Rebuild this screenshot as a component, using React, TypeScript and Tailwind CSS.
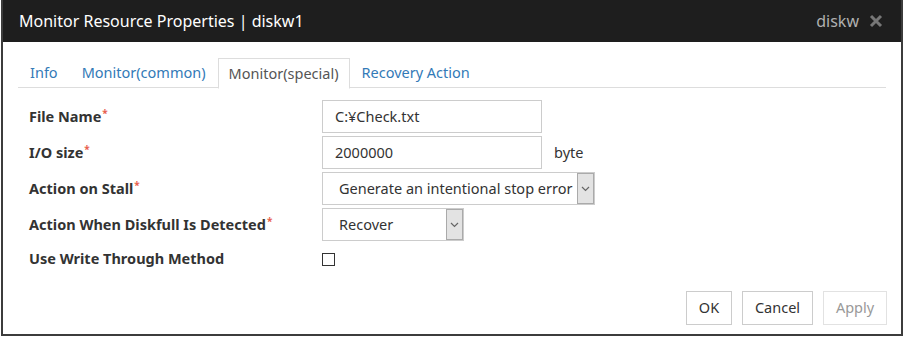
import React from 'react';

const tabs = ['Info', 'Monitor(common)', 'Monitor(special)', 'Recovery Action'];

const Star = () => <sup className="text-[#e8604c] text-[10px] font-bold -top-[5px] ml-[1px]">*</sup>;

const Arrow = () => (
  <div className="w-[17px] self-stretch bg-[#e3e3e3] border-[1px] border-[#aaa] flex items-center justify-center">
    <svg width="9" height="6" viewBox="0 0 9 6" fill="none" stroke="#666" strokeWidth={1.2}>
      <path d="M1 1l3.5 3.5L8 1" />
    </svg>
  </div>
);

const App: React.FC = () => {
  return (
    <div className="w-[904px] h-[338px] bg-white" style={{ fontFamily: '"Noto Sans", sans-serif' }}>
      <div className="ml-[1px] w-[902px] h-[336px] border-x-[2px] border-b-[2px] border-[#3c3c3c] flex flex-col">
        {/* Header */}
        <div className="h-[42px] bg-[#1e1e1e] flex items-center justify-between pl-[16px] pr-[18px]">
          <span className="text-white text-[16px]">Monitor Resource Properties | diskw1</span>
          <div className="flex items-center gap-[10px]">
            <span className="text-[#b0b0b0] text-[16px]">diskw</span>
            <svg width="14" height="14" viewBox="0 0 14 14" stroke="#777" strokeWidth={3}>
              <path d="M2 2l10 10M12 2L2 12" />
            </svg>
          </div>
        </div>

        {/* Tabs */}
        <div className="mx-[15px] mt-[16px] flex border-b border-[#ddd] h-[30px]">
          {tabs.map((t) => (
            <div
              key={t}
              className={`flex items-center text-[14.5px] ${
                t === 'Monitor(special)'
                  ? 'text-[#555] bg-white border border-[#ddd] border-b-white -mb-[1px] h-[31px] px-[10px]'
                  : 'text-[#337ab7] px-[12px]'
              }`}
            >
              {t}
            </div>
          ))}
        </div>

        {/* Form */}
        <div className="pl-[26px] pt-[12px] flex flex-col gap-[3px] text-[14.5px] text-[#333]">
          <div className="flex items-center h-[33px]">
            <div className="w-[293px] font-bold">File Name<Star /></div>
            <div className="w-[220px] h-[33px] border border-[#ccc] flex items-center px-[12px]">C:¥Check.txt</div>
          </div>
          <div className="flex items-center h-[33px]">
            <div className="w-[293px] font-bold">I/O size<Star /></div>
            <div className="w-[220px] h-[33px] border border-[#ccc] flex items-center px-[12px]">2000000</div>
            <span className="ml-[12px]">byte</span>
          </div>
          <div className="flex items-center h-[33px]">
            <div className="w-[293px] font-bold">Action on Stall<Star /></div>
            <div className="w-[273px] h-[33px] border border-[#ccc] flex items-stretch">
              <span className="flex-1 flex items-center pl-[16px]">Generate an intentional stop error</span>
              <Arrow />
            </div>
          </div>
          <div className="flex items-center h-[33px]">
            <div className="w-[293px] font-bold">Action When Diskfull Is Detected<Star /></div>
            <div className="w-[142px] h-[33px] border border-[#ccc] flex items-stretch">
              <span className="flex-1 flex items-center pl-[16px]">Recover</span>
              <Arrow />
            </div>
          </div>
          <div className="flex items-center h-[30px]">
            <div className="w-[293px] font-bold">Use Write Through Method</div>
            <div className="w-[13px] h-[13px] border border-[#333]" />
          </div>
        </div>

        {/* Buttons */}
        <div className="flex justify-end gap-[10px] pr-[14px] mt-[17px] text-[14.5px]">
          <div className="w-[46px] h-[34px] border border-[#ccc] flex items-center justify-center text-[#333]">OK</div>
          <div className="w-[71px] h-[34px] border border-[#ccc] flex items-center justify-center text-[#333]">Cancel</div>
          <div className="w-[64px] h-[34px] border border-[#e2e2e2] flex items-center justify-center text-[#999]">Apply</div>
        </div>
      </div>
    </div>
  );
};

export default App;
